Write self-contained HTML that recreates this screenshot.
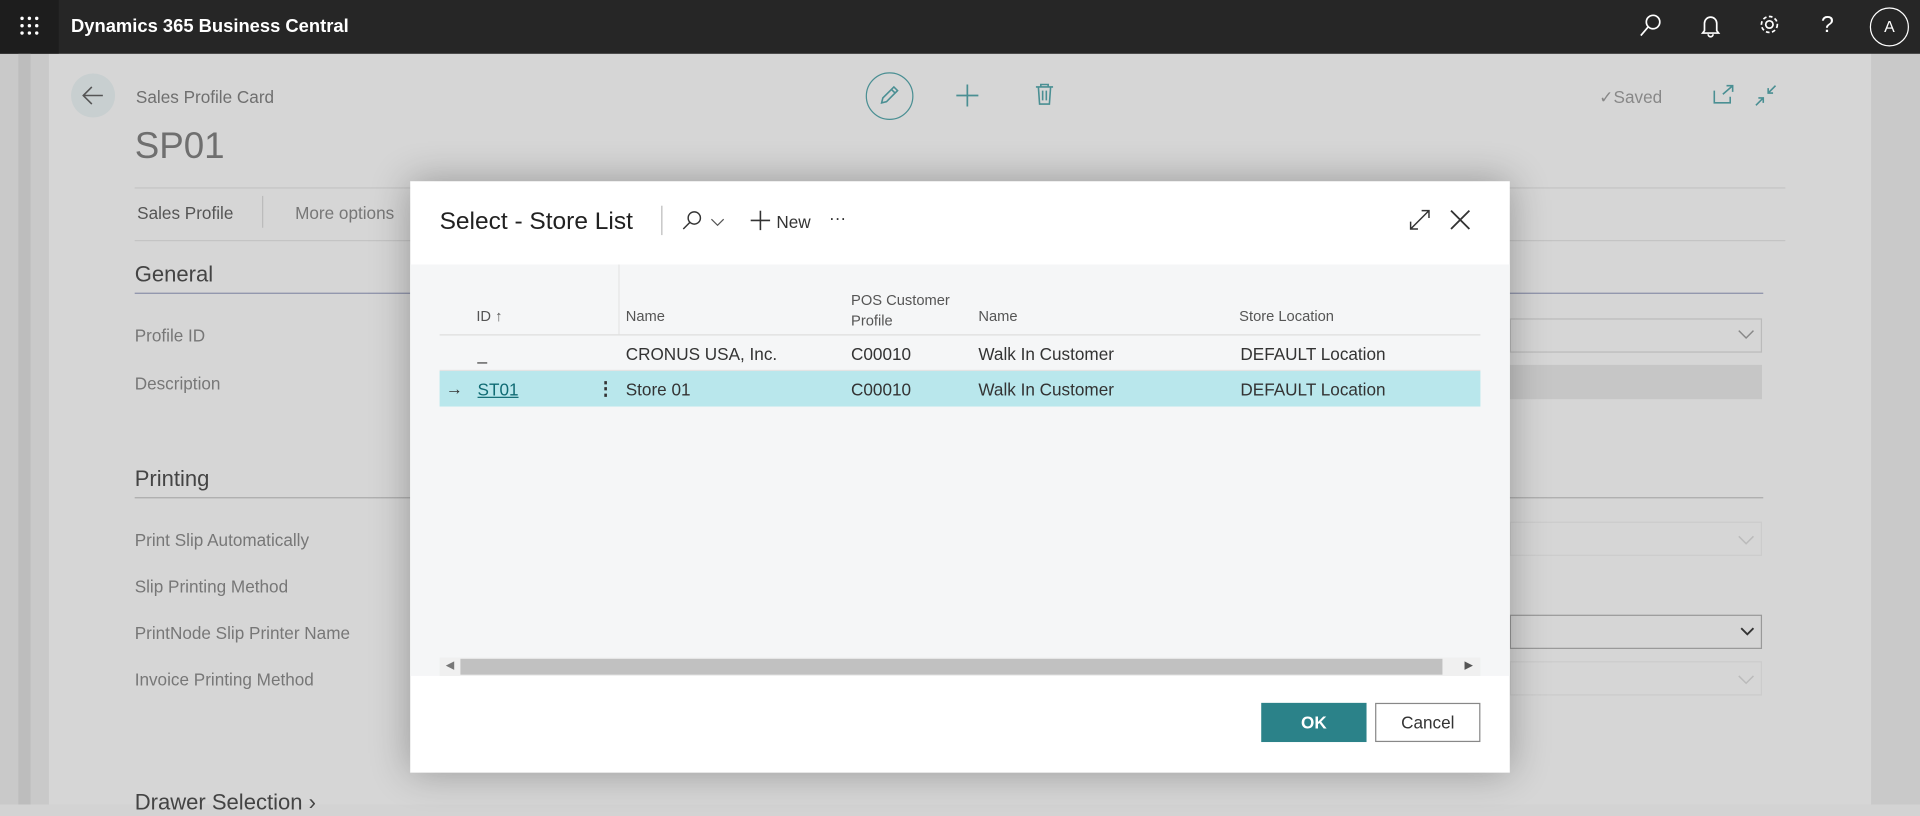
<!DOCTYPE html>
<html><head><meta charset="utf-8"><style>
html,body{margin:0;padding:0;width:1920px;height:804px;overflow:hidden;background:#d3d3d3}
#w{position:absolute;left:0;top:0;width:1568px;height:657px;transform:scale(1.22449);transform-origin:0 0;font-family:"Liberation Sans",sans-serif;color:#666}
.a{position:absolute;white-space:nowrap}
</style></head><body><div id="w">
<div class="a" style="left:0;top:0;width:1568px;height:44px;background:#262626"></div>
<div class="a" style="left:0;top:0;width:48px;height:44px;background:#1d1d1d"></div>
<svg class="a" style="left:16px;top:13px" width="16" height="16"><g fill="#fff"><circle cx="2" cy="2" r="1.4"/><circle cx="8" cy="2" r="1.4"/><circle cx="14" cy="2" r="1.4"/><circle cx="2" cy="8" r="1.4"/><circle cx="8" cy="8" r="1.4"/><circle cx="14" cy="8" r="1.4"/><circle cx="2" cy="14" r="1.4"/><circle cx="8" cy="14" r="1.4"/><circle cx="14" cy="14" r="1.4"/></g></svg>
<div class="a" style="left:58px;top:13px;color:#fff;font-size:15px;font-weight:bold">Dynamics 365 Business Central</div>
<svg class="a" style="left:1338px;top:11px" width="20" height="20" fill="none" stroke="#fff" stroke-width="1.4"><circle cx="12" cy="7" r="5.5"/><path d="M8 11L2 18"/></svg>
<svg class="a" style="left:1388px;top:11px" width="18" height="20" fill="none" stroke="#fff" stroke-width="1.4"><path d="M4 14V8a5 5 0 0110 0v6l1.5 2h-13z M7 17a2 2 0 004 0"/></svg>
<svg class="a" style="left:1436px;top:11px" width="18" height="18" fill="none" stroke="#fff" stroke-width="1.4"><circle cx="9" cy="9" r="3"/><circle cx="9" cy="9" r="6.5" stroke-dasharray="3 2"/></svg>
<div class="a" style="left:1487px;top:10px;color:#fff;font-size:19px">?</div>
<div class="a" style="left:1527px;top:6px;width:30px;height:30px;border:1px solid #fff;border-radius:50%;color:#fff;font-size:13px;text-align:center;line-height:30px">A</div>
<div class="a" style="left:0;top:44px;width:40px;height:613px;background:#c9c9c9"></div>
<div class="a" style="left:15px;top:44px;width:10px;height:613px;background:#bdbdbd"></div>
<div class="a" style="left:40px;top:44px;width:1488px;height:613px;background:#d6d6d6"></div>
<div class="a" style="left:1528px;top:44px;width:40px;height:613px;background:#c9c9c9"></div>
<div class="a" style="left:58px;top:60px;width:36px;height:36px;border-radius:50%;background:#c8cfd0"></div>
<svg class="a" style="left:66px;top:68px" width="20" height="20" fill="none" stroke="#555" stroke-width="1.3"><path d="M18 10H2M9 3L2 10l7 7"/></svg>
<div class="a" style="left:111px;top:71px;font-size:14px;color:#6f6f6f">Sales Profile Card</div>
<div class="a" style="left:110px;top:103px;font-size:30px;color:#6f6f6f;font-weight:300">SP01</div>
<div class="a" style="left:707px;top:59px;width:37px;height:37px;border:1px solid #4a8f93;border-radius:50%"></div>
<svg class="a" style="left:717px;top:69px" width="18" height="18" fill="none" stroke="#4a8f93" stroke-width="1.3"><path d="M3 15l1-4 9-9 3 3-9 9z M11 4l3 3"/></svg>
<svg class="a" style="left:780px;top:68px" width="20" height="20" stroke="#4a8f93" stroke-width="1.4"><path d="M10 1v18M1 10h18"/></svg>
<svg class="a" style="left:845px;top:68px" width="16" height="18" fill="none" stroke="#4a8f93" stroke-width="1.3"><path d="M1 3h14M5 3V1h6v2M3 3l1 14h8l1-14M6.5 6v8M9.5 6v8"/></svg>
<div class="a" style="left:1306px;top:71px;font-size:14px;color:#888">✓Saved</div>
<svg class="a" style="left:1399px;top:69px" width="18" height="16" fill="none" stroke="#4a8f93" stroke-width="1.3"><path d="M1 5v10h13V10M8 8l8-7M11 1h5v5"/></svg>
<svg class="a" style="left:1433px;top:69px" width="18" height="18" fill="none" stroke="#4a8f93" stroke-width="1.3"><path d="M17 1l-6 6M11 3v4h4M1 17l6-6M3 11h4v4"/></svg>
<div class="a" style="left:110px;top:153px;width:1348px;height:1px;background:#c4c4c4"></div>
<div class="a" style="left:112px;top:166px;font-size:14px;color:#555">Sales Profile</div>
<div class="a" style="left:214px;top:160px;width:1px;height:26px;background:#bbb"></div>
<div class="a" style="left:241px;top:166px;font-size:14px;color:#777">More options</div>
<div class="a" style="left:110px;top:196px;width:1348px;height:1px;background:#c4c4c4"></div>
<div class="a" style="left:110px;top:214px;font-size:18px;color:#444">General</div>
<div class="a" style="left:110px;top:239px;width:1330px;height:1px;background:#8a8fa8"></div>
<div class="a" style="left:110px;top:266px;font-size:14px;color:#777">Profile ID</div>
<div class="a" style="left:110px;top:305px;font-size:14px;color:#777">Description</div>
<div class="a" style="left:1233px;top:260px;width:206px;height:28px;border:1px solid #bbb;box-sizing:border-box"></div>
<svg class="a" style="left:1419px;top:269px" width="14" height="8" fill="none" stroke="#888" stroke-width="1.2"><path d="M1 1l6 6 6-6"/></svg>
<div class="a" style="left:1233px;top:298px;width:206px;height:28px;background:#c6c6c6"></div>
<div class="a" style="left:110px;top:381px;font-size:18px;color:#444">Printing</div>
<div class="a" style="left:110px;top:406px;width:1330px;height:1px;background:#aaa"></div>
<div class="a" style="left:110px;top:433px;font-size:14px;color:#777">Print Slip Automatically</div>
<div class="a" style="left:110px;top:471px;font-size:14px;color:#777">Slip Printing Method</div>
<div class="a" style="left:110px;top:509px;font-size:14px;color:#777">PrintNode Slip Printer Name</div>
<div class="a" style="left:110px;top:547px;font-size:14px;color:#777">Invoice Printing Method</div>
<div class="a" style="left:1233px;top:426px;width:206px;height:28px;border:1px solid #ccc;box-sizing:border-box"></div>
<svg class="a" style="left:1419px;top:437px" width="14" height="8" fill="none" stroke="#bbb" stroke-width="1.2"><path d="M1 1l6 6 6-6"/></svg>
<div class="a" style="left:1233px;top:502px;width:206px;height:28px;border:1px solid #999;box-sizing:border-box"></div>
<svg class="a" style="left:1421px;top:512px" width="12" height="8" fill="none" stroke="#333" stroke-width="1.5"><path d="M1 1l5 5 5-5"/></svg>
<div class="a" style="left:1233px;top:540px;width:206px;height:28px;border:1px solid #ccc;box-sizing:border-box"></div>
<svg class="a" style="left:1419px;top:551px" width="14" height="8" fill="none" stroke="#bbb" stroke-width="1.2"><path d="M1 1l6 6 6-6"/></svg>
<div class="a" style="left:110px;top:645px;font-size:18px;color:#444">Drawer Selection ›</div>

<div class="a" style="left:335px;top:148px;width:898px;height:483px;background:#fff;box-shadow:0 0 30px rgba(0,0,0,.3)"></div>
<div class="a" style="left:335px;top:216px;width:898px;height:336px;background:#f5f6f7"></div>
<div class="a" style="left:359px;top:170px;font-size:20px;color:#212121">Select - Store List</div>
<div class="a" style="left:540px;top:168px;width:1px;height:24px;background:#bbb"></div>
<svg class="a" style="left:556px;top:171px" width="18" height="18" fill="none" stroke="#333" stroke-width="1.2"><circle cx="11" cy="7" r="5"/><path d="M7.5 10.5L2 16"/></svg>
<svg class="a" style="left:580px;top:178px" width="12" height="7" fill="none" stroke="#555" stroke-width="1"><path d="M1 1l5 5 5-5"/></svg>
<svg class="a" style="left:613px;top:172px" width="16" height="16" stroke="#333" stroke-width="1.3"><path d="M8 0v16M0 8h16"/></svg>
<div class="a" style="left:634px;top:173px;font-size:14px;color:#333">New</div>
<div class="a" style="left:677px;top:170px;font-size:14px;color:#333">···</div>
<svg class="a" style="left:1151px;top:171px" width="17" height="17" fill="none" stroke="#333" stroke-width="1.2"><path d="M1 16L16 1M10 1h6v6M1 10v6h6"/></svg>
<svg class="a" style="left:1184px;top:171px" width="17" height="17" stroke="#333" stroke-width="1.5"><path d="M1 1L16 16M16 1L1 16"/></svg>
<div class="a" style="left:505px;top:216px;width:1px;height:57px;background:#e6e6e6"></div>
<div class="a" style="left:389px;top:251px;font-size:12px;color:#555">ID ↑</div>
<div class="a" style="left:511px;top:251px;font-size:12px;color:#555">Name</div>
<div class="a" style="left:695px;top:237px;font-size:12px;color:#555;line-height:17px">POS Customer<br>Profile</div>
<div class="a" style="left:799px;top:251px;font-size:12px;color:#555">Name</div>
<div class="a" style="left:1012px;top:251px;font-size:12px;color:#555">Store Location</div>
<div class="a" style="left:359px;top:273px;width:850px;height:1px;background:#ddd"></div>
<div class="a" style="left:359px;top:302px;width:850px;height:1px;background:#e3e3e3"></div>
<div class="a" style="left:390px;top:281px;font-size:14px;color:#333">_</div>
<div class="a" style="left:511px;top:281px;font-size:14px;color:#333">CRONUS USA, Inc.</div>
<div class="a" style="left:695px;top:281px;font-size:14px;color:#333">C00010</div>
<div class="a" style="left:799px;top:281px;font-size:14px;color:#333">Walk In Customer</div>
<div class="a" style="left:1013px;top:281px;font-size:14px;color:#333">DEFAULT Location</div>
<div class="a" style="left:359px;top:303px;width:850px;height:29px;background:#b9e7ec"></div>
<div class="a" style="left:364px;top:309px;font-size:14px;color:#333">→</div>
<div class="a" style="left:390px;top:310px;font-size:14px;color:#0f6b73;text-decoration:underline">ST01</div>
<div class="a" style="left:487px;top:308px;font-size:15px;color:#333;font-weight:bold">⋮</div>
<div class="a" style="left:511px;top:310px;font-size:14px;color:#333">Store 01</div>
<div class="a" style="left:695px;top:310px;font-size:14px;color:#333">C00010</div>
<div class="a" style="left:799px;top:310px;font-size:14px;color:#333">Walk In Customer</div>
<div class="a" style="left:1013px;top:310px;font-size:14px;color:#333">DEFAULT Location</div>
<div class="a" style="left:359px;top:537px;width:850px;height:15px;background:#f0f0f0"></div>
<div class="a" style="left:376px;top:538px;width:802px;height:13px;background:#c1c1c1"></div>
<div class="a" style="left:364px;top:538px;font-size:9px;color:#777">◀</div>
<div class="a" style="left:1196px;top:538px;font-size:9px;color:#555">▶</div>
<div class="a" style="left:1030px;top:574px;width:86px;height:32px;background:#2b8289;color:#fff;font-size:14px;font-weight:bold;text-align:center;line-height:32px">OK</div>
<div class="a" style="left:1123px;top:574px;width:86px;height:32px;border:1px solid #888;box-sizing:border-box;color:#333;font-size:14px;text-align:center;line-height:30px">Cancel</div>
</div></body></html>
